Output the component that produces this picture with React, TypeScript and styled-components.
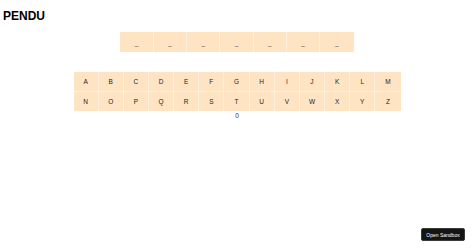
import React, { useState } from 'react';
import styled, { createGlobalStyle } from 'styled-components';

const GlobalStyle = createGlobalStyle`
  *, *::before, *::after {
    box-sizing: border-box;
  }
  html, body {
    margin: 0;
    padding: 0;
    background: #ffffff;
  }
  body {
    font-family: 'Liberation Sans', Arial, sans-serif;
    color: #111111;
  }
`;

const WORD = 'PENDULE';
const ALPHABET = 'ABCDEFGHIJKLMNOPQRSTUVWXYZ'.split('');

const Page = styled.div`
  padding: 9px 3px 0;
  display: flex;
  flex-direction: column;
`;

const Title = styled.h1`
  margin: 0;
  font-size: 12px;
  line-height: 14px;
  font-weight: 700;
  color: #000000;
`;

const WordRow = styled.div`
  margin-top: 9px;
  align-self: center;
  display: flex;
`;

const Slot = styled.div`
  width: 33.3px;
  height: 20px;
  background: #ffe4c4;
  border-right: 1px solid #fff0de;
  display: flex;
  align-items: center;
  justify-content: center;
  font-size: 6.5px;
  color: #555555;

  &:last-child {
    border-right: none;
  }
`;

const Keyboard = styled.div`
  margin-top: 20px;
  align-self: center;
  width: 327px;
  display: grid;
  grid-template-columns: repeat(13, 1fr);
  grid-auto-rows: 19.5px;
  background: #ffe4c4;
`;

const Key = styled.button<{ $used: boolean }>`
  border: none;
  border-right: 1px solid #fff0de;
  border-bottom: 1px solid #fff0de;
  padding: 0;
  margin: 0;
  background: ${(p) => (p.$used ? '#f5d2a8' : '#ffe4c4')};
  font-family: 'Liberation Sans', Arial, sans-serif;
  font-size: 6.5px;
  color: #222222;
  cursor: pointer;

  &:nth-child(13n) {
    border-right: none;
  }
  &:nth-child(n + 14) {
    border-bottom: none;
  }
`;

const Counter = styled.div`
  align-self: center;
  margin-top: 1px;
  font-size: 6.5px;
  line-height: 7px;
  color: #333333;
`;

const SandboxButton = styled.button`
  position: fixed;
  right: 9px;
  bottom: 7px;
  width: 44px;
  height: 13px;
  padding: 0;
  border: 1px solid #3a3a3a;
  border-radius: 2px;
  background: #151515;
  color: #ffffff;
  font-family: 'Liberation Sans', Arial, sans-serif;
  font-size: 5px;
  cursor: pointer;
`;

function App() {
  const [tried, setTried] = useState<string[]>([]);

  const handleKey = (letter: string) => {
    if (tried.includes(letter)) return;
    setTried((prev) => [...prev, letter]);
  };

  const errors = tried.filter((l) => !WORD.includes(l)).length;

  return (
    <>
      <GlobalStyle />
      <Page>
        <Title>PENDU</Title>

        <WordRow>
          {WORD.split('').map((l, i) => (
            <Slot key={i}>{tried.includes(l) ? l : '_'}</Slot>
          ))}
        </WordRow>

        <Keyboard>
          {ALPHABET.map((letter) => (
            <Key key={letter} $used={tried.includes(letter)} onClick={() => handleKey(letter)}>
              {letter}
            </Key>
          ))}
        </Keyboard>

        <Counter>{errors}</Counter>
      </Page>

      <SandboxButton>Open Sandbox</SandboxButton>
    </>
  );
}

export default App;
